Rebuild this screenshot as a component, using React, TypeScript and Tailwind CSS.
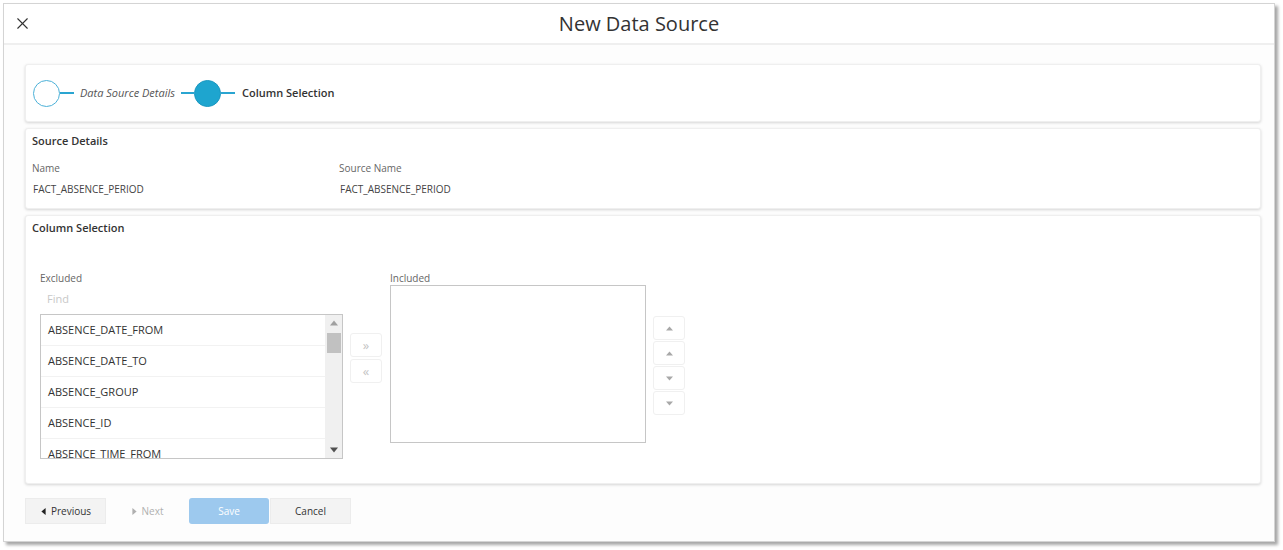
import { X } from 'lucide-react'

const excluded = ['ABSENCE_DATE_FROM', 'ABSENCE_DATE_TO', 'ABSENCE_GROUP', 'ABSENCE_ID', 'ABSENCE_TIME_FROM']

function Tri({ dir, className }: { dir: 'up' | 'down' | 'left' | 'right'; className?: string }) {
  const pts = {
    up: '0,8 5,2 10,8',
    down: '0,2 5,8 10,2',
    left: '8,0 2,5 8,10',
    right: '2,0 8,5 2,10',
  }[dir]
  return (
    <svg viewBox="0 0 10 10" className={className} fill="currentColor">
      <polygon points={pts} />
    </svg>
  )
}

function Card({ className, children }: { className?: string; children: React.ReactNode }) {
  return (
    <div className={'bg-white rounded-[3px] border border-[#efefef] shadow-[0_1px_3px_rgba(0,0,0,0.16)] ' + (className ?? '')}>
      {children}
    </div>
  )
}

function SmallBtn({ children, className }: { children: React.ReactNode; className?: string }) {
  return (
    <div className={'w-[32px] h-[24px] rounded-[3px] border border-[#f0f0f0] bg-white flex items-center justify-center text-[#c4c4c4] ' + (className ?? '')}>
      {children}
    </div>
  )
}

export default function App() {
  return (
    <div className="w-[1283px] h-[550px] bg-white pt-[3px] pl-[3px]" style={{ fontFamily: '"Open Sans", "Noto Sans", sans-serif' }}>
      <div className="w-[1272px] h-[539px] border border-[#d4d4d4] bg-[#fdfdfd] shadow-[3px_3px_3px_rgba(0,0,0,0.35)] flex flex-col">
        {/* header */}
        <div className="h-[41px] bg-white border-b-2 border-[#efefef] grid grid-cols-[1fr_auto_1fr] items-center">
          <div className="pl-[9px]">
            <X className="w-[19px] h-[19px] text-[#333]" strokeWidth={1.4} />
          </div>
          <div className="text-[20px] text-[#333] leading-none">New Data Source</div>
          <div />
        </div>

        <div className="pl-[21px] pr-[13px] pt-[19px] flex flex-col gap-[6px]">
          {/* stepper */}
          <Card className="h-[58px] flex items-center pl-[7px]">
            <div className="w-[27px] h-[27px] rounded-full border-[1.5px] border-[#4cb1d8] bg-white" />
            <div className="w-[14px] h-[2px] bg-[#2aa5d1]" />
            <span className="text-[11px] italic text-[#555] ml-[6px] mr-[6px]">Data Source Details</span>
            <div className="w-[13px] h-[2px] bg-[#2aa5d1]" />
            <div className="w-[27px] h-[27px] rounded-full bg-[#1ea5cf] border border-[#1a97c0]" />
            <div className="w-[14px] h-[2px] bg-[#2aa5d1]" />
            <span className="text-[11px] font-semibold text-[#333] ml-[7px]">Column Selection</span>
          </Card>

          {/* source details */}
          <Card className="h-[81px] pl-[6px] pt-[4px]">
            <div className="text-[11px] font-semibold text-[#333] leading-[16px]">Source Details</div>
            <div className="flex mt-[12px]">
              <div className="w-[307px]">
                <div className="text-[10px] text-[#666] leading-[14px]">Name</div>
                <div className="text-[10px] text-[#444] leading-[14px] mt-[7px] pl-[1px]">FACT_ABSENCE_PERIOD</div>
              </div>
              <div>
                <div className="text-[10px] text-[#666] leading-[14px]">Source Name</div>
                <div className="text-[10px] text-[#444] leading-[14px] mt-[7px] pl-[1px]">FACT_ABSENCE_PERIOD</div>
              </div>
            </div>
          </Card>

          {/* column selection */}
          <Card className="h-[269px] pl-[6px] pt-[4px]">
            <div className="text-[11px] font-semibold text-[#333] leading-[16px]">Column Selection</div>
            <div className="flex items-start mt-[35px] pl-[8px]">
              <div className="w-[303px]">
                <div className="text-[10px] text-[#666] leading-[14px]">Excluded</div>
                <div className="h-[29px] flex items-center pl-[7px] text-[11px] text-[#c8c8c8]">Find</div>
                <div className="h-[145px] border border-[#c6c6c6] bg-white flex overflow-hidden">
                  <div className="flex-1">
                    {excluded.map(c => (
                      <div key={c} className="h-[31px] border-b border-[#f2f2f2] flex items-center pl-[7px] text-[11px] text-[#333] shrink-0">
                        {c}
                      </div>
                    ))}
                  </div>
                  <div className="w-[17px] bg-[#f0f0f0] flex flex-col items-center">
                    <Tri dir="up" className="w-[8px] h-[8px] text-[#a0a0a0] mt-[4px]" />
                    <div className="w-[14px] h-[20px] bg-[#c1c1c1] mt-[6px]" />
                    <div className="flex-1" />
                    <Tri dir="down" className="w-[8px] h-[8px] text-[#505050] mb-[4px]" />
                  </div>
                </div>
              </div>

              <div className="ml-[7px] mt-[62px] flex flex-col gap-[2px]">
                <SmallBtn><span className="text-[13px] leading-none">»</span></SmallBtn>
                <SmallBtn><span className="text-[13px] leading-none">«</span></SmallBtn>
              </div>

              <div className="ml-[8px] w-[256px]">
                <div className="text-[10px] text-[#666] leading-[14px]">Included</div>
                <div className="h-[158px] border border-[#c6c6c6] bg-white" />
              </div>

              <div className="ml-[7px] mt-[45px] flex flex-col gap-[1px]">
                <SmallBtn><Tri dir="up" className="w-[7px] h-[7px] text-[#a8a8a8]" /></SmallBtn>
                <SmallBtn><Tri dir="up" className="w-[7px] h-[7px] text-[#a8a8a8]" /></SmallBtn>
                <SmallBtn><Tri dir="down" className="w-[7px] h-[7px] text-[#a8a8a8]" /></SmallBtn>
                <SmallBtn><Tri dir="down" className="w-[7px] h-[7px] text-[#a8a8a8]" /></SmallBtn>
              </div>
            </div>
          </Card>

          {/* footer */}
          <div className="flex items-center mt-[8px] h-[26px] text-[10px]">
            <div className="w-[81px] h-[26px] bg-[#f3f3f3] border border-[#ececec] flex items-center justify-center gap-[4px] text-[#333]">
              <Tri dir="left" className="w-[7px] h-[9px] text-[#222]" />
              Previous
            </div>
            <div className="w-[80px] h-[26px] ml-[1px] bg-[#fdfdfd] flex items-center justify-center gap-[4px] text-[#b0b0b0]">
              <Tri dir="right" className="w-[7px] h-[9px] text-[#b0b0b0]" />
              Next
            </div>
            <div className="w-[80px] h-[26px] ml-[2px] bg-[#9dc9ee] rounded-[3px] flex items-center justify-center text-white">
              Save
            </div>
            <div className="w-[81px] h-[26px] ml-[1px] bg-[#f3f3f3] border border-[#ececec] flex items-center justify-center text-[#333]">
              Cancel
            </div>
          </div>
        </div>
      </div>
    </div>
  )
}
